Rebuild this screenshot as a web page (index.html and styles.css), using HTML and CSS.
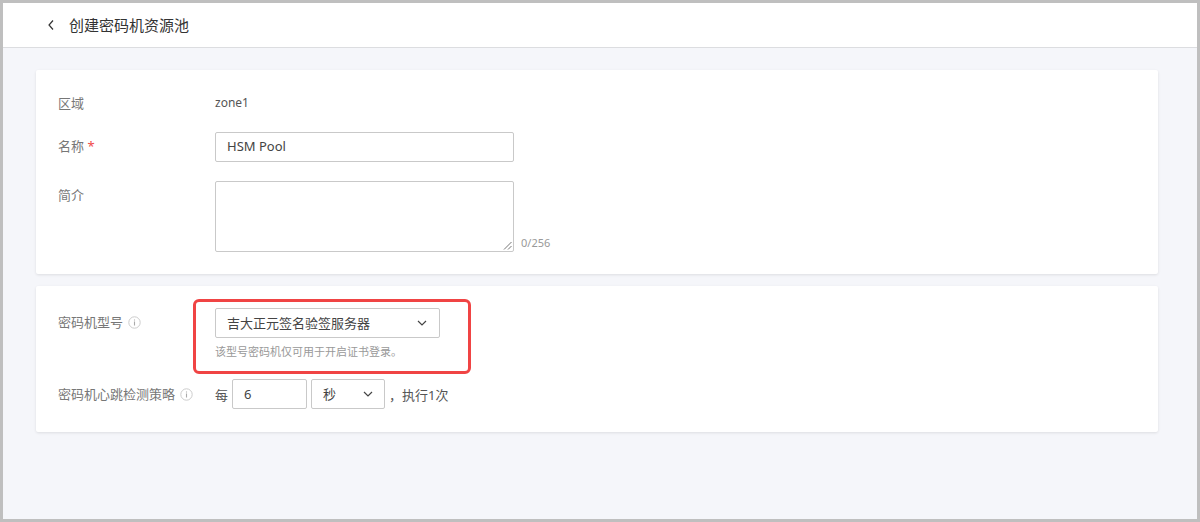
FILE: index.html
```html
<!DOCTYPE html>
<html lang="zh-CN">
<head>
<meta charset="utf-8">
<title>创建密码机资源池</title>
<link rel="stylesheet" href="styles.css">
</head>
<body>
<div class="frame">
  <header class="topbar">
    <svg class="back" width="8" height="12" viewBox="0 0 8 12"><path d="M6 1.5 2 6l4 4.5" fill="none" stroke="#333" stroke-width="1.2"/></svg>
    <h1 class="title">创建密码机资源池</h1>
  </header>
  <main class="content">
    <section class="card card-basic">
      <div class="row row-zone">
        <div class="label">区域</div>
        <div class="value">zone1</div>
      </div>
      <div class="row row-name">
        <div class="label">名称 <span class="req">*</span></div>
        <div class="input input-name">HSM Pool</div>
      </div>
      <div class="row row-desc">
        <div class="label">简介</div>
        <div class="textarea">
          <svg class="grip" width="9" height="9" viewBox="0 0 9 9"><path d="M8.5 1 1 8.5M8.5 5 5 8.5" stroke="#777" stroke-width="1" fill="none"/></svg>
        </div>
        <div class="count">0/256</div>
      </div>
    </section>
    <section class="card card-model">
      <div class="row row-model">
        <div class="label label-info">密码机型号
          <svg class="info" width="13" height="13" viewBox="0 0 13 13"><circle cx="6.5" cy="6.5" r="5.7" fill="none" stroke="#ccc"/><path d="M6.5 5.5v4M6.5 3.4v1.2" stroke="#aaa" stroke-width="1.1"/></svg>
        </div>
        <div class="model-col">
          <div class="select select-model">吉大正元签名验签服务器
            <svg class="chev" width="10" height="6" viewBox="0 0 10 6"><path d="M1 1l4 4 4-4" fill="none" stroke="#444" stroke-width="1.2"/></svg>
          </div>
          <div class="hint">该型号密码机仅可用于开启证书登录。</div>
        </div>
        <div class="highlight"></div>
      </div>
      <div class="row row-beat">
        <div class="label label-info">密码机心跳检测策略
          <svg class="info" width="13" height="13" viewBox="0 0 13 13"><circle cx="6.5" cy="6.5" r="5.7" fill="none" stroke="#ccc"/><path d="M6.5 5.5v4M6.5 3.4v1.2" stroke="#aaa" stroke-width="1.1"/></svg>
        </div>
        <div class="beat">
          <span class="beat-text">每</span>
          <div class="input input-num">6</div>
          <div class="select select-unit">秒
            <svg class="chev" width="10" height="6" viewBox="0 0 10 6"><path d="M1 1l4 4 4-4" fill="none" stroke="#444" stroke-width="1.2"/></svg>
          </div>
          <span class="beat-text beat-after">，执行1次</span>
        </div>
      </div>
    </section>
  </main>
</div>
</body>
</html>
```
FILE: styles.css
```css
* { box-sizing: border-box; }
html, body { margin: 0; height: 100%; }
body {
  font-family: "Noto Sans", "Noto Sans CJK SC", sans-serif;
  font-size: 13px;
  color: #555;
}
.frame {
  width: 1200px;
  height: 522px;
  border: 3px solid #bfbfbf;
  background: #f5f6fa;
  display: flex;
  flex-direction: column;
  overflow: hidden;
}
.topbar {
  height: 45px;
  flex: none;
  background: #fff;
  border-bottom: 1px solid #dcdde0;
  display: flex;
  align-items: center;
  padding-left: 44px;
}
.back { flex: none; }
.title {
  margin: 0 0 0 14px;
  font-size: 15px;
  font-weight: 400;
  color: #333;
  line-height: 20px;
}
.content {
  padding: 22px 39px 0 33px;
  display: flex;
  flex-direction: column;
  gap: 12px;
}
.card {
  background: #fff;
  box-shadow: 0 1px 3px rgba(0, 0, 0, 0.1);
  border-radius: 2px;
  padding-left: 22px;
}
.card-basic { height: 204px; padding-top: 23px; }
.card-model { height: 146px; padding-top: 22px; }
.row { display: flex; align-items: flex-start; }
.label {
  width: 157px;
  flex: none;
  line-height: 20px;
  color: #777;
}
.req { color: #f04848; }
.value { line-height: 20px; font-size: 12px; color: #555; }
.row-name { margin-top: 19px; }
.row-name .label { padding-top: 4px; }
.input, .select, .textarea {
  border: 1px solid #c9c9c9;
  border-radius: 2px;
  background: #fff;
}
.input, .select {
  height: 30px;
  line-height: 28px;
  padding-left: 11px;
  font-size: 13px;
  color: #444;
}
.input-name { width: 299px; line-height: 27px; }
.row-desc { margin-top: 19px; }
.row-desc .label { padding-top: 4px; }
.textarea { width: 299px; height: 71px; position: relative; }
.grip { position: absolute; right: 1px; bottom: 1px; }
.count {
  align-self: flex-end;
  margin-left: 7px;
  margin-bottom: 1px;
  line-height: 16px;
  font-size: 11px;
  color: #999;
}
.row-model { position: relative; }
.label-info { display: flex; align-items: center; gap: 5px; }
.row-model .label { padding-top: 4px; }
.model-col { display: flex; flex-direction: column; }
.select { display: flex; align-items: center; justify-content: space-between; padding-right: 12px; }
.select-model { width: 225px; }
.hint { margin-top: 6px; font-size: 11px; line-height: 16px; color: #999; }
.highlight {
  position: absolute;
  left: 135px;
  top: -9px;
  width: 278px;
  height: 75px;
  border: 3px solid #f04444;
  border-radius: 6px;
}
.row-beat { margin-top: 19px; align-items: center; }
.beat { display: flex; align-items: center; }
.beat-text { color: #555; }
.input-num { width: 75px; margin-left: 4px; }
.select-unit { width: 74px; margin-left: 4px; padding-right: 11px; }
.beat-after { margin-left: 4px; }
```
